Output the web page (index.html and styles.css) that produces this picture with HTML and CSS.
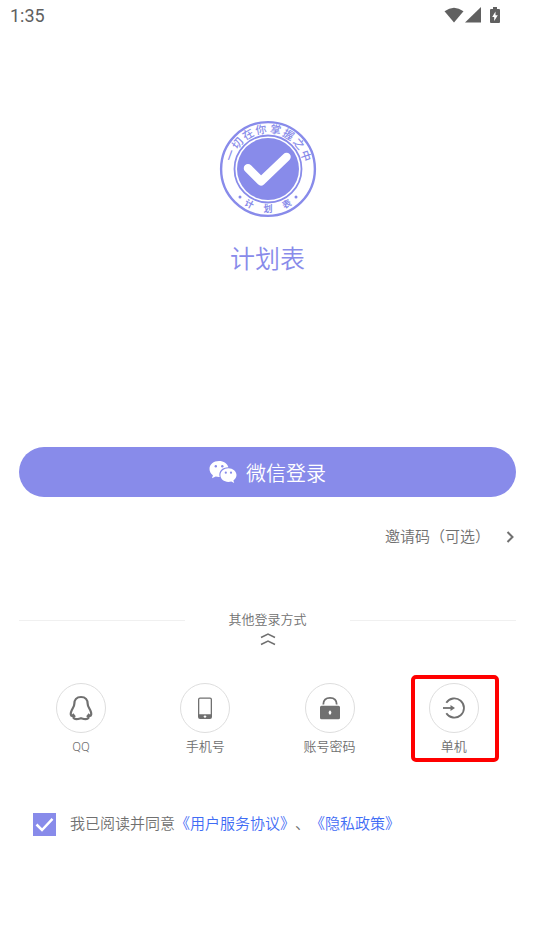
FILE: index.html
```html
<!DOCTYPE html>
<html lang="zh-CN">
<head>
<meta charset="utf-8">
<meta name="viewport" content="width=device-width, initial-scale=1">
<title>计划表</title>
<link rel="stylesheet" href="styles.css">
</head>
<body>
<header class="status">
  <time>1:35</time>
  <div class="status-icons">
    <svg width="20" height="18" viewBox="0 0 20 18"><path d="M.5 4.300Q10-2.800 19.500 4.300L10 15.500Z"/></svg>
    <svg width="16" height="18" viewBox="0 0 16 18"><path d="M16 0v15.500H0Z"/></svg>
    <svg class="battery" width="10" height="18" viewBox="0 0 10 18"><path fill-rule="evenodd" d="M3 0h4v2h2q1 0 1 1v12q0 1-1 1H1q-1 0-1-1V3q0-1 1-1h2ZM5.500 4.500 2.200 10h2v4L7.800 8.300H5.500Z"/></svg>
  </div>
</header>
<main class="page">
  <section class="brand">
    <svg class="logo" width="98" height="98" viewBox="-49 -49 98 98">
      <circle class="ring" r="46.900" stroke-width="2.400"/>
      <circle class="ring" r="33.500" stroke-width="1.800"/>
      <circle r="31"/>
      <path class="tick" d="M-20-.7-7 12.300 18.500-12"/>
      <g class="seal">
        <text y="-36" transform="rotate(-70)">一</text>
        <text y="-36" transform="rotate(-50)">切</text>
        <text y="-36" transform="rotate(-30)">在</text>
        <text y="-36" transform="rotate(-10)">你</text>
        <text y="-36" transform="rotate(11)">掌</text>
        <text y="-36" transform="rotate(31)">握</text>
        <text y="-36" transform="rotate(51)">之</text>
        <text y="-36" transform="rotate(71)">中</text>
      </g>
      <g class="seal seal-small">
        <text y="43" transform="rotate(28)">计</text>
        <text y="43" transform="rotate(0)">划</text>
        <text y="43" transform="rotate(-28)">表</text>
      </g>
      <circle cx="-28" cy="28" r="1.500"/><circle cx="28" cy="28" r="1.500"/>
    </svg>
    <h1>计划表</h1>
  </section>
  <button class="wechat" type="button">
    <svg width="28" height="24" viewBox="0 0 28 24">
      <path class="white" d="M10 1C4.500 1 .5 4.500.5 9c0 2.600 1.300 4.700 3.400 6.200L3 18.300l3.700-1.800c1.200.3 2.600.5 4 .4C9.200 11.500 13 7.300 19.400 7.300 18.500 3.500 14.700 1 10 1Z"/>
      <path class="white" d="M19.400 8.200c-4.500 0-8 3-8 6.900s3.500 6.900 8 6.900c1 0 2-.2 2.900-.5l2.900 1.500-.8-2.600c2-1.300 3.100-3.100 3.100-5.300 0-3.900-3.600-6.900-8.100-6.900Z"/>
      <circle cx="6.800" cy="6.300" r="1.200"/><circle cx="13.300" cy="6.300" r="1.200"/>
      <circle cx="16.800" cy="12.700" r="1.100"/><circle cx="22" cy="12.700" r="1.100"/>
    </svg>
    <span>微信登录</span>
  </button>
  <button class="invite" type="button">
    <span>邀请码（可选）</span>
    <svg width="8" height="12" viewBox="0 0 8 12"><path d="M1.500 1 6.500 6l-5 5"/></svg>
  </button>
  <div class="divider">
    <span class="line"></span>
    <span class="divider-text">其他登录方式</span>
    <span class="line"></span>
  </div>
  <svg class="collapse" width="16" height="14" viewBox="0 0 16 14"><path d="M1 5.500 8 2l7 3.500M1 12.500 8 9l7 3.500"/></svg>
  <nav class="options" aria-label="其他登录方式">
    <button class="option" type="button">
      <span class="disc"><svg width="26" height="26" viewBox="0 0 26 26"><path class="qq" d="M13 2C8.500 2 6.300 5 6.300 9c0 3-2.300 4.600-3.300 8.200-.5 2.100-.1 3.600.8 3.600.6 0 1-.4 1.500-.9l1 1.300c-.8.7-1 1.300-.6 2 .8 1.200 4.900.7 7.300 0 2.400.7 6.500 1.200 7.300 0 .4-.7.2-1.300-.6-2l1-1.300c.5.5.9.9 1.500.9.900 0 1.300-1.500.8-3.600-1-3.600-3.300-5.200-3.300-8.200 0-4-2.200-7-6.700-7Z"/></svg></span>
      <span>QQ</span>
    </button>
    <button class="option" type="button">
      <span class="disc"><svg width="26" height="26" viewBox="0 0 26 26"><path fill-rule="evenodd" d="M8 2.500h10q2 0 2 2V22q0 2-2 2H8q-2 0-2-2V4.500q0-2 2-2ZM7.300 4.500v14.800h11.400V4.500q0-.7-.7-.7H8q-.7 0-.7.7ZM13 20l-.7 1-1 .6 1 .6.7 1 .7-1 1-.6-1-.6Z"/></svg></span>
      <span>手机号</span>
    </button>
    <button class="option" type="button">
      <span class="disc"><svg width="26" height="26" viewBox="0 0 26 26"><path class="shackle" d="M6.300 9.500C6.300 5 9 2.900 13 2.900S19.700 5 19.700 9.500"/><path fill-rule="evenodd" d="M4.500 10.800h17q1.500 0 1.500 1.500v10.500q0 1.500-1.500 1.500h-17Q3 24.300 3 22.800V12.300q0-1.500 1.500-1.500ZM13 15.300q-2.800 2.300 0 4.800 2.800-2.500 0-4.800Z"/></svg></span>
      <span>账号密码</span>
    </button>
    <button class="option marked" type="button">
      <span class="disc"><svg width="26" height="26" viewBox="0 0 26 26"><path class="arc" d="M5.300 7.800A9.600 9.600 0 1 1 5.300 18.200"/><path class="arrow" d="M2 13h9"/><path d="M9.500 10 14 13l-4.500 3Z"/></svg></span>
      <span>单机</span>
    </button>
  </nav>
  <div class="agreement">
    <span class="check">
      <input id="agree" type="checkbox" checked>
      <svg width="23" height="23" viewBox="0 0 23 23"><path d="M3.500 11.500 9 17 19.500 5.800"/></svg>
    </span>
    <p><label for="agree">我已阅读并同意</label><a href="#terms">《用户服务协议》</a>、<a href="#privacy">《隐私政策》</a></p>
  </div>
</main>
</body>
</html>
```
FILE: styles.css
```css
* {
  box-sizing: border-box;
}

body {
  margin: 0;
  background: #fff;
  color: #707070;
  font-family: Roboto, "Noto Sans CJK SC", sans-serif;
  font-weight: 350;
  text-spacing-trim: space-all;
}

svg {
  display: block;
  fill: currentColor;
}

button {
  margin: 0;
  padding: 0;
  border: 0;
  background: none;
  color: inherit;
  font: inherit;
  cursor: pointer;
}

.status {
  display: flex;
  justify-content: space-between;
  align-items: center;
  height: 32px;
  padding: 0 35px 0 10px;
  color: #606060;
  font-size: 18px;
  font-weight: 400;
  line-height: 32px;
}

.status-icons {
  display: flex;
  align-items: center;
  gap: 1px;
}

.battery {
  margin-left: 8px;
}

.page {
  display: flex;
  flex-direction: column;
  padding: 88px 19px 40px;
}

.brand {
  display: flex;
  flex-direction: column;
  align-items: center;
  gap: 24px;
  color: #888bea;
}

.ring {
  fill: none;
  stroke: currentColor;
}

.tick {
  fill: none;
  stroke: #fff;
  stroke-width: 8.5;
  stroke-linecap: round;
  stroke-linejoin: round;
}

.seal {
  font-family: "Noto Sans CJK SC", sans-serif;
  font-size: 11px;
  font-weight: 500;
  text-anchor: middle;
}

.seal-small {
  font-size: 9px;
  font-weight: 700;
}

h1 {
  margin: 0;
  font-size: 25px;
  font-weight: 350;
  line-height: 36px;
}

.wechat {
  display: flex;
  justify-content: center;
  align-items: center;
  gap: 9px;
  height: 50px;
  margin-top: 169px;
  border-radius: 25px;
  background: #888bea;
  color: #888bea;
  font-size: 20px;
}

.wechat span {
  color: #fff;
}

.white {
  fill: #fff;
}

.invite {
  display: flex;
  align-items: center;
  align-self: flex-end;
  gap: 16px;
  margin-top: 28px;
  padding-right: 2px;
  font-size: 15px;
  line-height: 24px;
}

.invite path {
  fill: none;
  stroke: currentColor;
  stroke-width: 2;
}

.divider {
  display: grid;
  grid-template-columns: repeat(3, 1fr);
  align-items: center;
  margin-top: 61px;
  font-size: 13px;
  line-height: 20px;
  text-align: center;
}

.line {
  height: 1px;
  background: #f0f0f0;
}

.collapse {
  align-self: center;
  margin-top: 2px;
  fill: none;
  stroke: currentColor;
  stroke-width: 1.5;
}

.options {
  display: grid;
  grid-template-columns: repeat(4, 1fr);
  margin-top: 37px;
}

.option {
  position: relative;
  display: flex;
  flex-direction: column;
  align-items: center;
  gap: 4px;
  font-size: 13px;
  line-height: 20px;
}

.disc {
  display: grid;
  place-items: center;
  width: 50px;
  height: 50px;
  border: 1px solid #dedede;
  border-radius: 50%;
}

.qq,
.shackle,
.arc,
.arrow {
  fill: none;
  stroke: currentColor;
  stroke-width: 1.8;
}

.qq {
  stroke-width: 2.2;
}

.marked::after {
  content: "";
  position: absolute;
  inset: -8px 17px -5px 19px;
  border: 4px solid #f00;
  border-radius: 5px;
}

.agreement {
  display: flex;
  align-items: center;
  gap: 14px;
  margin-top: 55px;
  padding-left: 14px;
  font-size: 15px;
  line-height: 24px;
}

.agreement p {
  margin: 0;
}

.agreement a {
  color: #3f6cf5;
  text-decoration: none;
}

.check {
  display: grid;
}

.check input,
.check svg {
  grid-area: 1 / 1;
}

.check input {
  appearance: none;
  width: 23px;
  height: 23px;
  margin: 0;
  background: #888bea;
}

.check svg {
  fill: none;
  stroke: #fff;
  stroke-width: 2.5;
  pointer-events: none;
}
```
